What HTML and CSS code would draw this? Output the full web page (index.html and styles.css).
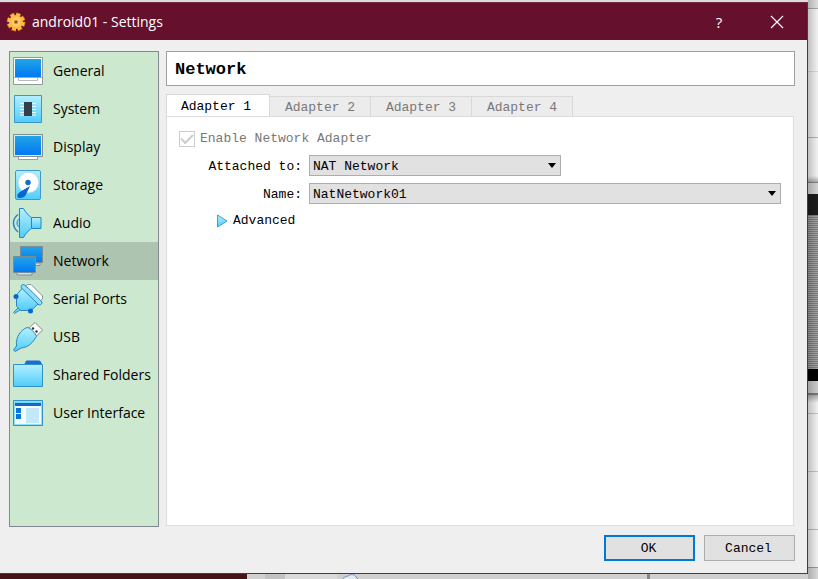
FILE: index.html
```html
<!DOCTYPE html>
<html lang="en">
<head>
<meta charset="utf-8">
<title>android01 - Settings</title>
<meta name="viewport" content="width=device-width, initial-scale=1">
<link rel="stylesheet" href="styles.css">
</head>
<body>
<svg class="defs" aria-hidden="true">
  <defs>
    <linearGradient id="deep" x1="0" y1="0" x2="0" y2="1"><stop offset="0" stop-color="#22a5e6"/><stop offset="1" stop-color="#0078f5"/></linearGradient>
    <linearGradient id="pale" x1="0" y1="0" x2="0" y2="1"><stop offset="0" stop-color="#b4f0ff"/><stop offset="1" stop-color="#50ccfa"/></linearGradient>
    <radialGradient id="sun"><stop offset="0" stop-color="#ffe9a0"/><stop offset="1" stop-color="#fdb035"/></radialGradient>
  </defs>
</svg>
<div class="desktop">
  <div class="behind-top"></div>
  <main class="window">
    <header class="titlebar">
      <svg class="app-icon" viewBox="0 0 20 20" aria-hidden="true">
        <circle cx="10" cy="10" r="7.600" fill="none" stroke="#d9781a" stroke-width="3.600" stroke-dasharray="4.200 1.770"/>
        <circle cx="10" cy="10" r="7.200" fill="none" stroke="#ffc04a" stroke-width="2.600" stroke-dasharray="3.700 1.955"/>
        <circle cx="10" cy="10" r="7" fill="url(#sun)"/>
        <circle cx="10" cy="10" r="1.800" fill="#8a4a10" stroke="#e88a1c"/>
      </svg>
      <h1 class="title">android01 - Settings</h1>
      <button class="caption-button" type="button" aria-label="Help">?</button>
      <button class="caption-button" type="button" aria-label="Close">
        <svg class="close-icon" viewBox="0 0 14 14" aria-hidden="true"><path d="M1 1 13 13M13 1 1 13" stroke="#fff" stroke-width="1.200"/></svg>
      </button>
    </header>
    <div class="content">
      <nav class="sidebar">
        <a class="nav-item" href="#general">
          <svg class="nav-icon" viewBox="0 0 32 32" aria-hidden="true"><path d="M1.500 2.500h29v27h-29z" fill="#fff" stroke="#92999b"/><path d="M3 4h26v18H3z" fill="url(#deep)"/><path d="M2 22.500h28" stroke="#a5acb0"/><path d="M6.500 23v2.500h19V23" fill="#fff" stroke="#b5bbbd"/></svg>General</a>
        <a class="nav-item" href="#system">
          <svg class="nav-icon" viewBox="0 0 32 32" aria-hidden="true"><path d="M2.500 2.500h27v27h-27z" fill="url(#pale)" stroke="#3c97cf"/><path d="M8 10.500h16M8 13.500h16M8 16.500h16M8 19.500h16M8 22h16" stroke="#eef8fc"/><path d="M12 9h8v14h-8z" fill="#353f49"/></svg>System</a>
        <a class="nav-item" href="#display">
          <svg class="nav-icon" viewBox="0 0 32 32" aria-hidden="true"><path d="M6.500 25h19v3.500h-19z" fill="#fff" stroke="#969da0"/><path d="M1.500 3.500h29v22h-29z" fill="#dfe8ea" stroke="#858d91"/><path d="M3 5h26v19H3z" fill="url(#deep)"/></svg>Display</a>
        <a class="nav-item" href="#storage">
          <svg class="nav-icon" viewBox="0 0 32 32" aria-hidden="true"><rect x="3.500" y="1.500" width="25" height="29" rx="1.500" fill="url(#pale)" stroke="#3999cf"/><circle cx="16.500" cy="13.500" r="10.500" fill="#fff" stroke="#a2d9ee"/><circle cx="16" cy="13.500" r="2.700" fill="#126bc8"/><path d="m18 17-4.500 9.500C11 29.500 6.500 29.500 5.500 28c-.8-2 .5-4 4-6z" fill="#0866cf"/></svg>Storage</a>
        <a class="nav-item" href="#audio">
          <svg class="nav-icon" viewBox="0 0 32 32" aria-hidden="true"><path d="M6 7.500C0 12 0 20 6 25" fill="none" stroke="#2784c3" stroke-width="1.500"/><path d="M8 11.500c-4 1-4 8 0 9" fill="#84daf8" stroke="#2784c3"/><path d="M7.500 1.500h4c2 4 5 7 8 9v11c-3 2-6 5-8 9h-4z" fill="url(#pale)" stroke="#2784c3"/><path d="M19.500 10.500H29v11h-9.500z" fill="url(#pale)" stroke="#2784c3"/></svg>Audio</a>
        <a class="nav-item selected" href="#network" aria-current="page">
          <svg class="nav-icon" viewBox="0 0 32 32" aria-hidden="true"><path d="M14 18h14v2.500H14z" fill="#c3e3f8" stroke="#7d9297"/><path d="M8.500 1.500h22v16h-22z" fill="url(#deep)" stroke="#798d95"/><path d="M5 27.500h15V30H5z" fill="#c3e3f8" stroke="#7d9297"/><path d="M1.500 11.500h22v16h-22z" fill="url(#deep)" stroke="#798d95"/></svg>Network</a>
        <a class="nav-item" href="#serial-ports">
          <svg class="nav-icon" viewBox="0 0 32 32" aria-hidden="true"><path d="m13 3 3-1.500h3L30.500 13v3L28 18z" fill="#fff" stroke="#889399"/><path d="m6.500 24.500-5 5 1 1 6-4" fill="#76d6f8" stroke="#2c87be"/><path d="M10.500 5 4.500 12v11l4 4.500H19l7.500-7z" fill="url(#pale)" stroke="#2c87be"/><path d="M9 4.500c0-2 1-3 3-3 6 5 12 11 18 17.500 0 2-1 3-3 3z" fill="#8fdef8" stroke="#2c87be"/><circle cx="4" cy="13.500" r="2.500" fill="#0a65cf"/><circle cx="18.500" cy="28" r="2.500" fill="#0a65cf"/></svg>Serial Ports</a>
        <a class="nav-item" href="#usb">
          <svg class="nav-icon" viewBox="0 0 32 32" aria-hidden="true"><path d="m17 7 6-5.500L30.500 9 24 15.500z" fill="#fff" stroke="#858b8e"/><circle cx="21" cy="7.500" r="1.200" fill="#333"/><circle cx="24.500" cy="10.500" r="1.200" fill="#333"/><path d="M15 6.500c3 0 9 6 9.500 9-3 5-7.500 11-15.500 11.500l-4 2.500-2 1-1.500-1.500L3 27l1.500-2C3.500 15.500 9 9 15 6.500z" fill="url(#pale)" stroke="#2e86b8"/></svg>USB</a>
        <a class="nav-item" href="#shared-folders">
          <svg class="nav-icon" viewBox="0 0 32 32" aria-hidden="true"><path d="M12 6c1-1 1-4 3-4.500h12c2 0 2.500 3 3.500 4.500z" fill="#1a6dd1"/><path d="M1.500 5.500h29v22h-29z" fill="url(#pale)" stroke="#3091c8"/></svg>Shared Folders</a>
        <a class="nav-item" href="#user-interface">
          <svg class="nav-icon" viewBox="0 0 32 32" aria-hidden="true"><path d="M1.500 3.500h29v25h-29z" fill="#8edff9" stroke="#3093cb"/><path d="M3 5h26v22H3z" fill="#f5fcff"/><path d="M3 5h26v3H3z" fill="#6dd5f7"/><path d="M3 6h26v3H3z" fill="#1c67bd"/><path d="M4 11h5v5H4zM4 17h5v5H4z" fill="#0875dc"/><path d="M14 11h13v15H14z" fill="#c2e9fa"/></svg>User Interface</a>
      </nav>
      <section class="settings">
        <h2 class="page-title">Network</h2>
        <div class="tabs" role="tablist">
          <button class="tab active" type="button" role="tab" aria-selected="true">Adapter 1</button>
          <button class="tab" type="button" role="tab" aria-selected="false">Adapter 2</button>
          <button class="tab" type="button" role="tab" aria-selected="false">Adapter 3</button>
          <button class="tab" type="button" role="tab" aria-selected="false">Adapter 4</button>
        </div>
        <form class="panel" role="tabpanel">
          <label class="enable"><input class="check" type="checkbox" checked disabled>Enable Network Adapter</label>
          <div class="fields">
            <label class="field-label" for="attached">Attached to:</label>
            <span class="combo combo-short"><select id="attached" class="select"><option>NAT Network</option></select></span>
            <label class="field-label" for="name">Name:</label>
            <span class="combo"><select id="name" class="select"><option>NatNetwork01</option></select></span>
          </div>
          <button class="advanced" type="button" aria-expanded="false">
            <svg class="expander" viewBox="0 0 12 14" aria-hidden="true"><path d="M1.500 1 11 7l-9.500 6z" fill="url(#pale)" stroke="#3b9de0"/></svg>Advanced</button>
        </form>
      </section>
    </div>
    <footer class="actions">
      <button class="button primary" type="button">OK</button>
      <button class="button" type="button">Cancel</button>
    </footer>
  </main>
  <div class="behind-side"></div>
  <div class="behind-bottom"><span class="wallpaper"></span><span class="shade"></span><span class="toolbar"></span>
    <svg class="cloud" viewBox="0 0 20 5" aria-hidden="true"><path d="M2 5C3 2 5 3 7 2c2-2 7-2 8 1l2 2" fill="#e2eaf3" stroke="#6b8fc2"/></svg>
    <span class="grip"></span></div>
</div>
</body>
</html>
```
FILE: styles.css
```css
* { box-sizing: border-box; }

body {
  margin: 0;
  background: #ddd;
  color: #000;
  font: 13px/16px "Liberation Mono", monospace;
}

button, select { font: inherit; color: inherit; }

.defs { position: absolute; width: 0; height: 0; }

.desktop {
  display: grid;
  grid-template: 2px 1fr 5px / 1fr 10px;
  min-height: 100vh;
}

.behind-top { background: #dcdcde; }

.behind-side {
  grid-column: 2;
  grid-row: 1 / 4;
  background:
    linear-gradient(90deg, #0003, #0000) 0 0 / 100% 100%,
    linear-gradient(
      #dedede 0 8px, #a9a9a9 8px 9px, #f2f2f2 9px 71px, #d8d8d8 71px 72px,
      #f2f2f2 72px 137px, #b5b5b5 137px 138px, #f2f2f2 138px 176px,
      #aaa 182px, #808080 182px 183px, #d2d2d2 183px 194px, #1c1c1c 194px 215px,
      #0000 215px 369px, #000 369px 381px, #cacaca 381px 393px,
      #777 393px 395px, #aaa 395px, #f2f2f2 403px 413px, #c4c4c4 413px 414px,
      #f2f2f2 414px 471px, #c4c4c4 471px 472px, #f2f2f2 472px 529px,
      #b8b8b8 529px 530px, #f2f2f2 530px 567px, #999 567px 568px, #d8d8d8 568px),
    repeating-linear-gradient(#a3a3a3 0 1px, #7e7e7e 1px 2px);
}

.behind-bottom {
  grid-row: 3;
  display: flex;
  background: #d0d0d0;
}

.wallpaper { flex: 0 0 247px; background: #461417; }
.shade { flex: 0 0 38px; background: #c2c2c2; border-left: 18px solid #d0d0d0; }
.toolbar { flex: 0 0 52px; background: #dadada; }
.cloud { width: 20px; height: 5px; margin-left: 4px; }
.grip { width: 3px; margin-left: auto; margin-right: 158px; background: #888; }

.window {
  grid-column: 1;
  grid-row: 2;
  display: flex;
  flex-direction: column;
  min-width: 0;
  background: #efefef;
  border: 0 solid #6d2742;
  border-width: 0 1px 1px 0;
}

.titlebar {
  display: flex;
  align-items: center;
  height: 38px;
  padding: 0 1px 0 6px;
  background: #65102d;
  border-top: 1px solid #752843;
  color: #fff;
}

.app-icon { width: 20px; height: 20px; }

.title {
  flex: 1;
  margin: 0 0 0 6px;
  font: 14px/20px "Open Sans", sans-serif;
}

.caption-button {
  display: grid;
  place-items: center;
  width: 58px;
  height: 37px;
  padding: 0;
  border: 0;
  background: none;
  font: 15px/20px "Open Sans", sans-serif;
}

.close-icon { width: 14px; height: 14px; }

.content {
  flex: 1;
  display: flex;
  gap: 7px;
  padding: 11px 12px 0 9px;
}

.sidebar {
  flex: 0 0 150px;
  background: #cce8cf;
  border: 1px solid #828790;
}

.nav-item {
  display: flex;
  align-items: center;
  gap: 9px;
  height: 38px;
  padding-left: 2px;
  color: #000;
  font: 14px/20px "Open Sans", sans-serif;
  text-decoration: none;
  white-space: nowrap;
}

.nav-item.selected { background: #adc5b0; }

.nav-icon { flex: none; width: 32px; height: 32px; }

.settings {
  flex: 1;
  display: flex;
  flex-direction: column;
  min-width: 0;
}

.page-title {
  height: 35px;
  margin: 0;
  padding: 0 8px;
  background: #fff;
  border: 1px solid #a0a0a0;
  font-size: 17px;
  line-height: 35px;
}

.tabs {
  display: flex;
  align-items: flex-end;
  height: 31px;
  margin-bottom: -1px;
}

.tab {
  width: 102px;
  height: 21px;
  padding: 2px 0 0;
  margin-right: -1px;
  background: #ececec;
  border: 1px solid #d9d9d9;
  color: #787878;
  white-space: nowrap;
}

.tab.active {
  width: 104px;
  height: 23px;
  padding-right: 4px;
  background: #fff;
  border-bottom: 0;
  color: #000;
}

.panel {
  flex: 1;
  margin: 0 1px 1px 0;
  padding: 12px;
  background: #fff;
  border: 1px solid #dcdcdc;
}

.enable {
  display: flex;
  align-items: center;
  gap: 5px;
  height: 20px;
  color: #787878;
}

.check {
  appearance: none;
  display: grid;
  place-items: center;
  width: 16px;
  height: 16px;
  margin: 0;
  border: 1px solid #ccc;
}

.check:checked::before {
  content: "";
  width: 10px;
  height: 5px;
  margin-bottom: 3px;
  border: solid #ccc;
  border-width: 0 0 2px 2px;
  transform: rotate(-45deg);
}

.fields {
  display: grid;
  grid-template-columns: 123px 1fr;
  gap: 7px;
  align-items: center;
  margin-top: 6px;
}

.field-label {
  padding-top: 2px;
  text-align: right;
}

.combo {
  position: relative;
  display: block;
  height: 21px;
}

.combo-short { width: 252px; }

.combo::after {
  content: "";
  position: absolute;
  top: 8px;
  right: 5px;
  width: 8px;
  height: 5px;
  background: #000;
  clip-path: polygon(0 0, 100% 0, 50% 100%);
  pointer-events: none;
}

.select {
  appearance: none;
  display: block;
  width: 100%;
  height: 21px;
  padding: 2px 20px 0 3px;
  background: #e1e1e1;
  border: 1px solid #adadad;
  border-radius: 0;
}

.advanced {
  display: flex;
  align-items: center;
  gap: 5px;
  height: 20px;
  margin: 7px 0 0 37px;
  padding: 0;
  border: 0;
  background: none;
}

.expander { width: 12px; height: 14px; }

.actions {
  display: flex;
  justify-content: flex-end;
  gap: 9px;
  padding: 8px 12px 12px;
}

.button {
  width: 91px;
  height: 26px;
  padding: 2px 2px 0 0;
  background: #e1e1e1;
  border: 1px solid #adadad;
}

.button.primary { border: 2px solid #0078d7; }
```
